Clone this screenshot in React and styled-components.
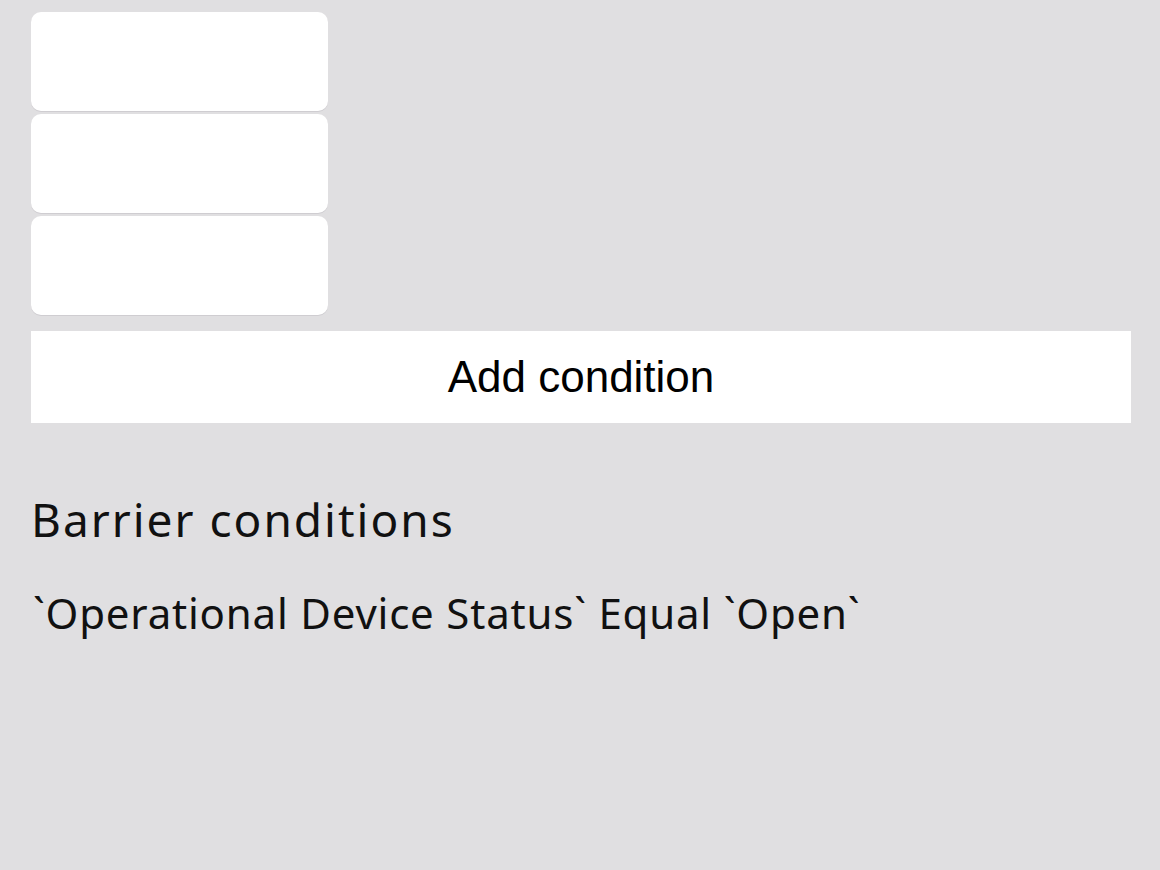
import React from 'react'
import styled, { createGlobalStyle } from 'styled-components'

const Global = createGlobalStyle`
  html, body {
    margin: 0;
    padding: 0;
    background: #e0dfe1;
    font-family: 'Noto Sans', 'Open Sans', sans-serif;
    color: #111;
  }
`

const Page = styled.div`
  width: 1160px;
  height: 870px;
  box-sizing: border-box;
  padding: 12px 29px 0 31px;
  display: flex;
  flex-direction: column;
`

const CardList = styled.ul`
  list-style: none;
  margin: 0;
  padding: 0;
  display: flex;
  flex-direction: column;
  gap: 3px;
`

const Card = styled.li`
  width: 297px;
  height: 99px;
  box-sizing: border-box;
  background: #fff;
  border-radius: 10px;
  box-shadow: 0 1px 0 #cfcdd1;
`

const AddButton = styled.button`
  margin-top: 16px;
  height: 92px;
  border: 0;
  background: #fff;
  font-family: 'Liberation Sans', Arial, sans-serif;
  font-size: 44px;
  color: #000;
  padding: 0;
  cursor: pointer;
`

const Heading = styled.h2`
  margin: 73px 0 0;
  font-weight: 400;
  font-size: 46px;
  letter-spacing: 2px;
  line-height: 1;
`

const Rule = styled.p`
  margin: 50px 0 0 2px;
  font-size: 42px;
  letter-spacing: 0.8px;
  line-height: 1;
`

export default () => (
  <>
    <Global />
    <Page>
      <CardList>
        {[0, 1, 2].map(i => (
          <Card key={i} />
        ))}
      </CardList>
      <AddButton>Add condition</AddButton>
      <Heading>Barrier conditions</Heading>
      <Rule>`Operational Device Status` Equal `Open`</Rule>
    </Page>
  </>
)
